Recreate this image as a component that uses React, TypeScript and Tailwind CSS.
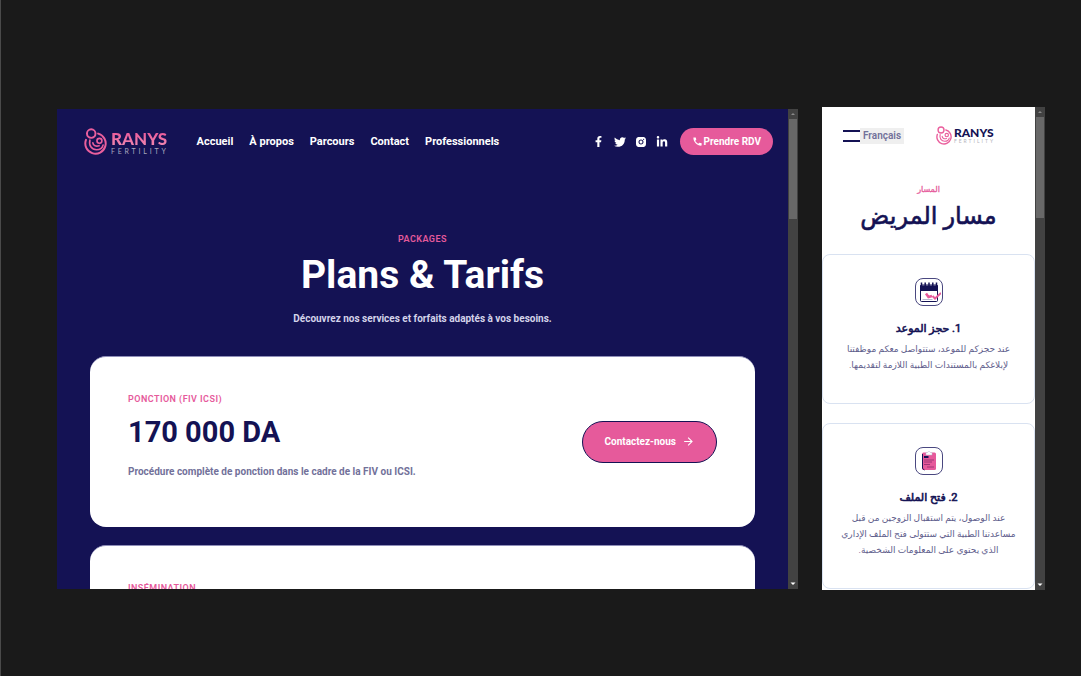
import React from "react";
import { FaFacebookF, FaTwitter, FaLinkedinIn } from "react-icons/fa";
import { RiInstagramFill } from "react-icons/ri";
import { MdCall, MdArrowForward } from "react-icons/md";

const navLinks = ["Accueil", "À propos", "Parcours", "Contact", "Professionnels"];

const socials = [
  { label: "Facebook", icon: <FaFacebookF className="h-[11px] w-[11px]" /> },
  { label: "Twitter", icon: <FaTwitter className="h-3 w-3" /> },
  { label: "Instagram", icon: <RiInstagramFill className="h-[14px] w-[14px]" /> },
  { label: "LinkedIn", icon: <FaLinkedinIn className="h-3 w-3" /> },
];

const plans = [
  {
    name: "PONCTION (FIV ICSI)",
    price: "170 000 DA",
    text: "Procédure complète de ponction dans le cadre de la FIV ou ICSI.",
    action: "Contactez-nous",
  },
  { name: "INSÉMINATION" },
];

function LogoMark({ className }: { className: string }) {
  return (
    <svg viewBox="0 0 70 82" className={className} fill="none" stroke="#ea5f9d" strokeLinecap="round" aria-hidden="true">
      <circle cx="22" cy="17" r="13" strokeWidth="6" />
      <path d="M43 17 A31 31 0 1 1 6 36" strokeWidth="6" />
      <circle cx="47" cy="39" r="7.500" strokeWidth="5" />
      <path d="M18 37 C14 54 24 66 38 66 C48 66 56 60 58 52" strokeWidth="5" />
      <path d="M27 45 C28 54 37 57 46 54" strokeWidth="5" />
    </svg>
  );
}

function CalendarIcon() {
  return (
    <svg viewBox="0 0 24 24" className="h-6 w-6" fill="none" aria-hidden="true">
      <rect x="3.500" y="5" width="17" height="16.500" rx="1" stroke="#141254" strokeWidth="1" />
      <path d="M3 5.500h18V11H3z" fill="#141254" />
      <path d="M4.500 2.500v4M8.200 2.500v4M12 2.500v4M15.800 2.500v4M19.500 2.500v4" stroke="#141254" strokeWidth="1.500" />
      <path d="M9 13.500l2.500 3.500 3.500-1" stroke="#e65a9b" strokeWidth="2.500" />
      <path d="M15.500 16l2.500 2.500L24 13" stroke="#e65a9b" strokeWidth="2" />
      <path d="M5.500 19.500h10" stroke="#b9b8d0" strokeWidth="1" />
    </svg>
  );
}

function ClipboardIcon() {
  return (
    <svg viewBox="0 0 24 24" className="h-6 w-6" fill="none" aria-hidden="true">
      <rect x="5" y="3.500" width="14" height="17.500" rx="1.500" fill="#e65a9b" />
      <path d="M5.500 5v14.500L7.500 21" stroke="#141254" strokeWidth="1" />
      <path d="M9 3.500h1.500l1.500-1.500 1.500 1.500H15v2.500H9z" fill="#fff" stroke="#b9b8d0" strokeWidth="0.500" />
      <path d="M7 8h4.500" stroke="#141254" strokeWidth="2" />
      <path d="M7 11h10M7 13h8M7 15.500h6M10 18h7" stroke="#8a2f6d" strokeWidth="0.800" />
    </svg>
  );
}

const steps = [
  {
    title: "1. حجز الموعد",
    lines: ["عند حجزكم للموعد، ستتواصل معكم موظفتنا", "لإبلاغكم بالمستندات الطبية اللازمة لتقديمها."],
    icon: <CalendarIcon />,
  },
  {
    title: "2. فتح الملف",
    lines: [
      "عند الوصول، يتم استقبال الزوجين من قبل",
      "مساعدتنا الطبية التي ستتولى فتح الملف الإداري",
      "الذي يحتوي على المعلومات الشخصية.",
    ],
    icon: <ClipboardIcon />,
  },
];

function Scrollbar() {
  return (
    <div className="flex w-[10px] shrink-0 flex-col items-center justify-between bg-[#424242]" aria-hidden="true">
      <div className="flex h-[23%] w-full flex-col items-center">
        <svg viewBox="0 0 10 10" className="h-[10px] w-[10px] shrink-0" fill="#8a8a8a">
          <path d="M3 6l2-2 2 2z" />
        </svg>
        <div className="w-2 grow bg-[#686868]" />
      </div>
      <svg viewBox="0 0 10 10" className="h-[10px] w-[10px]" fill="#fff">
        <path d="M2.500 3.500h5L5 6z" />
      </svg>
    </div>
  );
}

function PlansWindow() {
  return (
    <section className="flex aspect-[741/480] overflow-hidden bg-[#141254]">
      <div className="min-w-0 grow overflow-hidden">
        <header className="flex items-center pt-[19px] pr-[15px] pl-[27px]">
          <a href="#accueil" className="flex h-7 items-center gap-1" aria-label="Ranys Fertility">
            <LogoMark className="h-[27px] w-[23px]" />
            <span className="flex flex-col pt-[2px]">
              <span className="bg-linear-to-b from-[#e84f96] to-[#f08fb5] bg-clip-text font-['Lato'] text-[17px] leading-[18px] font-black text-transparent">RANYS</span>
              <span className="font-['Lato'] text-[7px] leading-[7px] tracking-[0.4em] text-[#a9a8bf]">FERTILITY</span>
            </span>
          </a>
          <nav className="ml-7 flex gap-4 text-[11px] leading-4 font-bold whitespace-nowrap text-white">
            {navLinks.map((n) => (
              <a key={n} href="#menu">{n}</a>
            ))}
          </nav>
          <div className="ml-auto flex items-center gap-[9px] text-white">
            {socials.map((s) => (
              <a key={s.label} href="#social" aria-label={s.label} className="flex w-3 justify-center">{s.icon}</a>
            ))}
          </div>
          <button className="ml-3 flex h-[27px] items-center gap-px rounded-full bg-[#e65a9b] px-3 text-[10px] font-bold whitespace-nowrap text-white">
            <MdCall className="h-[11px] w-[11px]" />
            Prendre RDV
          </button>
        </header>
        <main className="px-[33px] pt-[75px]">
          <div className="text-center">
            <p className="text-[9px] leading-4 font-semibold tracking-wider text-[#e65a9b]">PACKAGES</p>
            <h1 className="mt-1 text-[39px] leading-[48px] font-bold text-white">Plans &amp; Tarifs</h1>
            <p className="mt-3 text-[10px] leading-4 font-bold text-[#d4d4ea]">Découvrez nos services et forfaits adaptés à vos besoins.</p>
          </div>
          <div className="mt-[29px] flex flex-col gap-[18px]">
            {plans.map((p) => (
              <article key={p.name} className="flex h-[171px] items-start justify-between rounded-2xl border-t border-[#8f8eb8] bg-white px-[38px] pt-[34px]">
                <div>
                  <h2 className="text-[9px] leading-4 font-semibold tracking-wider text-[#e65a9b]">{p.name}</h2>
                  {p.price && <p className="mt-1 text-[29px] leading-[42px] font-bold text-[#141254]">{p.price}</p>}
                  {p.text && <p className="mt-[11px] text-[10px] leading-4 font-bold text-[#72719a]">{p.text}</p>}
                </div>
                {p.action && (
                  <button className="mt-[30px] flex h-[42px] items-center gap-[6px] rounded-full border border-[#141254] bg-[#e65a9b] px-[21px] text-[10px] font-bold whitespace-nowrap text-white">
                    {p.action}
                    <MdArrowForward className="h-[13px] w-[13px]" />
                  </button>
                )}
              </article>
            ))}
          </div>
        </main>
      </div>
      <Scrollbar />
    </section>
  );
}

function JourneyWindow() {
  return (
    <section className="flex aspect-[223/483] overflow-hidden bg-white">
      <div className="min-w-0 grow overflow-hidden" lang="ar">
        <header className="flex items-center justify-between pt-[19px] pr-10 pl-[21px]">
          <div className="flex items-center">
            <button aria-label="Menu" className="flex flex-col gap-2">
              <span className="h-[2px] w-[17px] bg-[#141254]" />
              <span className="h-[2px] w-[17px] bg-[#141254]" />
            </button>
            <button className="h-4 bg-[#efefef] px-[3px] text-[10px] leading-4 font-semibold text-[#72719a]">Français</button>
          </div>
          <a href="#home" className="flex items-center gap-[2px]" aria-label="Ranys Fertility">
            <LogoMark className="h-[19px] w-4" />
            <span className="flex flex-col">
              <span className="font-['Lato'] text-[12px] leading-3 font-black text-[#141254]">RANYS</span>
              <span className="font-['Lato'] text-[5px] leading-[5px] tracking-[0.4em] text-[#b4b4bc]">FERTILITY</span>
            </span>
          </a>
        </header>
        <main className="pt-[39px]" dir="rtl">
          <div className="text-center">
            <p className="text-[8px] leading-3 text-[#e65a9b] [-webkit-text-stroke:0.3px]">المسار</p>
            <h1 className="mt-1 text-[24px] leading-8 text-[#141254] [-webkit-text-stroke:0.6px]">مسار المريض</h1>
          </div>
          <div className="mt-[22px] flex flex-col gap-[19px]">
            {steps.map((s) => (
              <article key={s.title} className="flex flex-col items-center rounded-lg border border-[#d9e2f1] pt-[23px] pb-[30px] text-center">
                <div className="flex h-7 w-7 items-center justify-center rounded-lg border border-[#4a4880]">{s.icon}</div>
                <h2 className="mt-[15px] text-[11px] leading-4 text-[#141254] [-webkit-text-stroke:0.6px]">{s.title}</h2>
                <p className="mt-1 text-[9px] leading-4 whitespace-nowrap text-[#5f5e8c]">
                  {s.lines.map((l) => (
                    <span key={l} className="block">{l}</span>
                  ))}
                </p>
              </article>
            ))}
          </div>
        </main>
      </div>
      <Scrollbar />
    </section>
  );
}

export default function App() {
  return (
    <div className="flex min-h-screen items-center border-l border-[#4a4a4a] bg-[#1a1a1a] pt-[21px] pr-9 pl-14 font-['Roboto','DejaVu_Sans',sans-serif]">
      <div className="grid w-full grid-cols-[741fr_223fr] items-center gap-6">
        <PlansWindow />
        <JourneyWindow />
      </div>
    </div>
  );
}
